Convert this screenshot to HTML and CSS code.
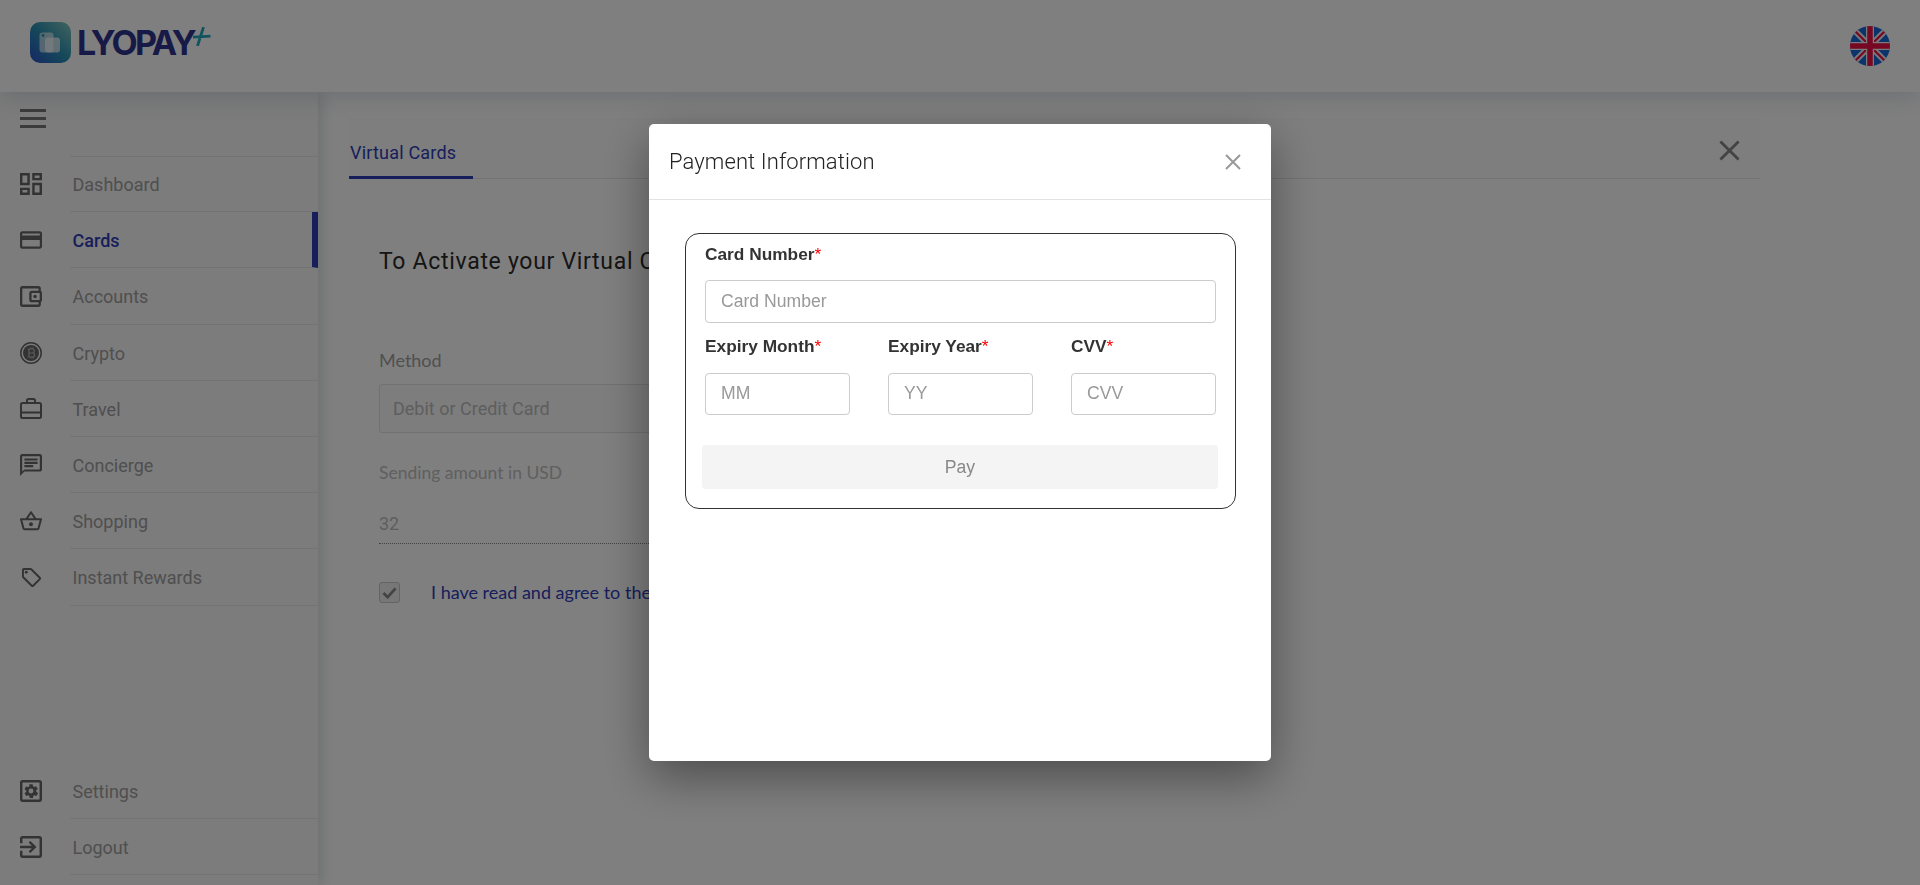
FILE: index.html
```html
<!DOCTYPE html>
<html lang="en">
<head>
<meta charset="utf-8">
<title>Lyopay</title>
<link rel="stylesheet" href="styles.css">
</head>
<body>
<div class="app">
  <header class="topbar">
    <div class="logo">
      <svg class="logo-mark" viewBox="0 0 41 41">
        <defs><linearGradient id="lg" x1="0" y1="1" x2="1" y2="0"><stop offset="0" stop-color="#2a50c8"/><stop offset=".5" stop-color="#2a92b4"/><stop offset="1" stop-color="#86c8c0"/></linearGradient></defs>
        <rect width="41" height="41" rx="10" fill="url(#lg)"/>
        <rect x="9.500" y="10.500" width="14" height="20" rx="3" fill="#fff" fill-opacity=".6"/>
        <rect x="15" y="15.500" width="15" height="15" rx="3" fill="#fff" fill-opacity=".7"/>
        <circle cx="13" cy="13.500" r="1.400" fill="#2a92b4"/>
      </svg>
      <span class="logo-text">LYOPAY</span>
      <svg class="logo-plus" viewBox="0 0 18 19"><path d="M0 10.200 L17.500 9.200 M10.500 0 L4.500 19" fill="none" stroke="#22a8c0" stroke-width="2.800"/></svg>
    </div>
    <svg class="flag" viewBox="0 0 40 40">
      <defs><clipPath id="fc"><circle cx="20" cy="20" r="20"/></clipPath></defs>
      <g clip-path="url(#fc)">
        <rect width="40" height="40" fill="#1668d8"/>
        <path d="M0 0 L40 40 M40 0 L0 40" stroke="#f2f2f2" stroke-width="6"/>
        <path d="M4 4 L17 17 M36 36 L23 23 M36 4 L24 16 M4 36 L16 24" stroke="#ee1048" stroke-width="2.200"/>
        <path d="M20 0 V40 M0 20 H40" stroke="#f2f2f2" stroke-width="8"/>
        <path d="M20 0 V40 M0 20 H40" stroke="#ee1048" stroke-width="5.500"/>
      </g>
    </svg>
  </header>

  <div class="layout">
    <aside class="sidebar">
      <button class="burger" type="button" aria-label="Menu"><span></span><span></span><span></span></button>
      <nav class="nav first-nav">
        <a class="row"><span class="ico"><svg width="22" height="22" viewBox="3 3 18 18"><path d="M19 5v2h-4V5h4M9 5v6H5V5h4m10 8v6h-4v-6h4M9 17v2H5v-2h4M21 3h-8v6h8V3zM11 3H3v10h8V3zm10 8h-8v10h8V11zm-10 4H3v6h8v-6z"/></svg></span><span class="lbl">Dashboard</span></a>
        <a class="row active"><span class="ico"><svg width="22" height="18" viewBox="2 4 20 16"><path d="M20 4H4c-1.110 0-1.990.890-1.990 2L2 18c0 1.110.890 2 2 2h16c1.110 0 2-.890 2-2V6c0-1.110-.890-2-2-2zm0 14H4v-6h16v6zm0-10H4V6h16v2z"/></svg></span><span class="lbl">Cards</span></a>
        <a class="row"><span class="ico"><svg width="22" height="21" viewBox="3 3 19 18"><path d="M21 7.280V5c0-1.100-.900-2-2-2H5c-1.110 0-2 .900-2 2v14c0 1.100.890 2 2 2h14c1.100 0 2-.900 2-2v-2.280c.590-.350 1-.980 1-1.720V9c0-.740-.410-1.370-1-1.720zM20 9v6h-7V9h7zM5 19V5h14v2h-6c-1.100 0-2 .900-2 2v6c0 1.100.900 2 2 2h6v2H5z"/><circle cx="16" cy="12" r="1.500"/></svg></span><span class="lbl">Accounts</span></a>
        <a class="row"><span class="ico"><svg width="22" height="22" viewBox="0 0 22 22"><circle cx="11" cy="11" r="10.200" fill="none" stroke="#666" stroke-width="1.500"/><circle cx="11" cy="11" r="8"/><path d="M9 6.500v9M11 5.500v1.500M13 5.500v1.500M11 15v1.500M13 15v1.500M7.800 7h4.400a2 2 0 0 1 0 4H9h3.600a2 2 0 0 1 0 4H7.800" fill="none" stroke="#b8b8b8" stroke-width="1.200"/></svg></span><span class="lbl">Crypto</span></a>
        <a class="row"><span class="ico"><svg width="22" height="21" viewBox="0 0 22 21"><path d="M7 5V2.500A1.500 1.500 0 0 1 8.500 1h5A1.500 1.500 0 0 1 15 2.500V5" fill="none" stroke="#666" stroke-width="2"/><rect x="1" y="5" width="20" height="15" rx="1.500" fill="none" stroke="#666" stroke-width="2"/><path d="M1 14.500h20" stroke="#666" stroke-width="2"/></svg></span><span class="lbl">Travel</span></a>
        <a class="row"><span class="ico"><svg width="22" height="22" viewBox="2 2 20 20"><path d="M20 2H4c-1.100 0-2 .900-2 2v18l4-4h14c1.100 0 2-.900 2-2V4c0-1.100-.900-2-2-2zm0 14H6l-2 2V4h16v12z"/><path d="M6 6h12v2H6zm0 3h12v2H6zm0 3h8v2H6z"/></svg></span><span class="lbl">Concierge</span></a>
        <a class="row"><span class="ico"><svg width="22" height="20" viewBox="1 2 22 19.500"><path d="M22 9h-4.790l-4.380-6.560c-.190-.280-.510-.420-.830-.420s-.640.140-.830.430L6.790 9H2c-.550 0-1 .450-1 1 0 .090.010.180.040.270l2.540 9.270c.230.840 1 1.460 1.920 1.460h13c.920 0 1.690-.620 1.930-1.460l2.540-9.270L23 10c0-.550-.450-1-1-1zM12 4.800L14.800 9H9.200L12 4.800zM18.500 19l-12.990.010L3.310 11H20.700l-2.200 8zM12 13c-1.100 0-2 .900-2 2s.900 2 2 2 2-.900 2-2-.900-2-2-2z"/></svg></span><span class="lbl">Shopping</span></a>
        <a class="row"><span class="ico"><svg class="tag" width="19" height="19" viewBox="2 2 20 20"><path d="M21.410 11.580l-9-9C12.050 2.220 11.550 2 11 2H4c-1.100 0-2 .900-2 2v7c0 .550.220 1.050.590 1.420l9 9c.360.360.860.580 1.410.580s1.050-.220 1.410-.590l7-7c.370-.360.590-.860.590-1.410s-.230-1.060-.590-1.420zM13 20.010L4 11V4h7v-.010l9 9-7 7.020z"/><circle cx="6.500" cy="6.500" r="1.500"/></svg></span><span class="lbl">Instant Rewards</span></a>
      </nav>
      <nav class="nav bottom-nav">
        <a class="row"><span class="ico"><svg width="22" height="22" viewBox="3 3 18 18"><path d="M19 3H5c-1.110 0-2 .900-2 2v14c0 1.100.890 2 2 2h14c1.110 0 2-.900 2-2V5c0-1.100-.890-2-2-2zm0 16H5V5h14v14z"/><path transform="translate(2.400 2.400) scale(.8)" d="M17.250 12c0-.230-.020-.460-.050-.680l1.480-1.160c.130-.110.170-.300.080-.450l-1.400-2.420c-.090-.150-.270-.210-.430-.150l-1.740.700c-.360-.280-.760-.510-1.180-.690l-.260-1.850c-.030-.170-.180-.300-.350-.300h-2.800c-.170 0-.320.130-.350.300L10.300 7.350c-.420.180-.820.410-1.180.690l-1.740-.700c-.160-.060-.340 0-.430.150l-1.400 2.420c-.090.150-.050.340.080.450l1.480 1.160c-.030.220-.050.450-.050.680 0 .230.020.460.050.680l-1.480 1.160c-.130.110-.170.300-.080.450l1.400 2.420c.090.150.270.210.430.150l1.740-.700c.360.280.760.510 1.180.69l.260 1.850c.030.170.180.300.350.300h2.800c.170 0 .320-.130.350-.300l.260-1.850c.420-.180.820-.410 1.180-.690l1.740.700c.160.060.340 0 .430-.150l1.400-2.420c.090-.150.050-.340-.080-.450l-1.480-1.160c.030-.220.050-.450.050-.680zm-5.250 2.500a2.500 2.500 0 1 1 0-5 2.500 2.500 0 0 1 0 5z"/></svg></span><span class="lbl">Settings</span></a>
        <a class="row"><span class="ico"><svg width="22" height="22" viewBox="3 3 18 18"><path d="M10.090 15.590L11.500 17l5-5-5-5-1.410 1.410L12.670 11H3v2h9.670l-2.580 2.590zM19 3H5c-1.110 0-2 .900-2 2v4h2V5h14v14H5v-4H3v4c0 1.100.890 2 2 2h14c1.100 0 2-.900 2-2V5c0-1.100-.900-2-2-2z"/></svg></span><span class="lbl">Logout</span></a>
      </nav>
    </aside>

    <main class="main">
      <div class="tabbar">
        <span class="tab">Virtual Cards</span>
        <svg class="tab-close" viewBox="0 0 22 22"><path d="M1.500 1.500 L20.500 20.500 M20.500 1.500 L1.500 20.500" stroke="#868686" stroke-width="3" fill="none"/></svg>
      </div>
      <section class="panel">
        <h2 class="headline">To Activate your Virtual Card</h2>
        <label class="f-label">Method</label>
        <div class="select">Debit or Credit Card</div>
        <label class="f-label amount-label">Sending amount in USD</label>
        <div class="amount">32</div>
        <div class="agree">
          <span class="check"><svg viewBox="0 0 16 14" width="15" height="13"><path d="M1.500 7.500 L6 12 L14.500 2.500" fill="none" stroke="#888" stroke-width="3"/></svg></span>
          <span class="agree-text">I have read and agree to the terms</span>
        </div>
      </section>
    </main>
  </div>
</div>

<div class="overlay">
  <div class="modal">
    <div class="modal-head">
      <h3 class="modal-title">Payment Information</h3>
      <svg class="modal-close" viewBox="0 0 16 16"><path d="M1 1 L15 15 M15 1 L1 15" stroke="#999" stroke-width="2" fill="none"/></svg>
    </div>
    <div class="modal-body">
      <form class="pay-box">
        <div class="lab card-lab">Card Number<i>*</i></div>
        <input class="inp" type="text" placeholder="Card Number">
        <div class="triple">
          <div class="col"><div class="lab">Expiry Month<i>*</i></div><input class="inp" type="text" placeholder="MM"></div>
          <div class="col"><div class="lab">Expiry Year<i>*</i></div><input class="inp" type="text" placeholder="YY"></div>
          <div class="col"><div class="lab">CVV<i>*</i></div><input class="inp" type="text" placeholder="CVV"></div>
        </div>
        <button class="pay" type="button">Pay</button>
      </form>
    </div>
  </div>
</div>
</body>
</html>
```
FILE: styles.css
```css
* { box-sizing: border-box; }
html, body { margin: 0; height: 100%; overflow: hidden; }
body { background: #fff; font-family: Roboto, "Liberation Sans", sans-serif; color: #333; }

.app { height: 885px; display: flex; flex-direction: column; }

.topbar {
  height: 92px; flex: none; background: #fff; position: relative; z-index: 2;
  display: flex; align-items: center; justify-content: space-between;
  padding: 0 30px; box-shadow: 0 4px 24px rgba(40, 60, 90, .18);
}
.logo { display: flex; align-items: center; margin-top: -8px; }
.logo-mark { width: 41px; height: 41px; display: block; }
.logo-text {
  font-family: Inter, "Liberation Sans", sans-serif; font-weight: 700; font-size: 34px;
  letter-spacing: -2.6px; color: #2f358e; margin-left: 6px; line-height: 41px;
}
.logo-plus { width: 18px; height: 19px; margin: -11px 0 0 -1px; }
.flag { width: 40px; height: 40px; display: block; }

.layout { flex: 1; display: flex; min-height: 0; }

.sidebar {
  width: 318px; flex: none; background: #f8f8f8; display: flex; flex-direction: column;
  padding-bottom: 10px; position: relative; z-index: 1;
  box-shadow: 4px 0 12px rgba(40, 60, 90, .16);
}
.burger {
  height: 64px; flex: none; border: 0; background: none; padding: 17px 0 0 20px;
  display: flex; flex-direction: column; gap: 5px; align-items: flex-start;
}
.burger span { display: block; width: 26px; height: 3px; background: #777; }
.nav { display: flex; flex-direction: column; }
.bottom-nav { margin-top: auto; }
.row { height: 56.2px; display: flex; align-items: stretch; }
.ico { width: 70px; flex: none; display: flex; align-items: center; padding-left: 20px; }
.ico svg { display: block; fill: #666; margin: 0 auto 0 0; }
.ico .tag { margin-left: 2px; }
.lbl {
  flex: 1; display: flex; align-items: center; padding: 2px 0 0 2.5px;
  font-size: 18px; color: #9e9e9e; border-bottom: 1px solid #e6e6e6;
}
.first-nav .row:first-child .lbl { border-top: 1px solid #e6e6e6; padding-top: 0; }
.row.active .lbl { color: #2f3cb8; font-weight: 500; border-right: 6px solid #2f3cb8; }

.main { flex: 1; min-width: 0; padding: 26px 160px 0 31px; }
.tabbar {
  height: 61px; display: flex; align-items: flex-end; justify-content: space-between;
  border-bottom: 1px solid #e6e6e6; background: #fcfcfc;
}
.tab {
  display: block; width: 124px; height: 38px; padding: 0 0 0 1px;
  font-size: 18px; line-height: 24px; color: #2f3cb8; letter-spacing: .2px;
  border-bottom: 3px solid #2f3cb8; margin-bottom: -1px;
}
.tab-close { width: 21px; height: 21px; margin: 0 20px 17px 0; }

.panel { padding: 67px 0 0 30px; width: 900px; }
.headline {
  margin: 0; font-size: 23px; font-weight: 400; line-height: 32px; color: #2a2a2a; letter-spacing: .7px;
}
.f-label {
  display: block; font-family: Lato, sans-serif; font-size: 18px; line-height: 24px; color: #a0a0a0;
  margin-top: 70px;
}
.select {
  margin-top: 12px; height: 49px; width: 820px; border: 1px solid #e2e2e2; background: #fafafa;
  border-radius: 3px; padding-left: 13px; display: flex; align-items: center;
  font-size: 18px; color: #bdbdbd;
}
.amount-label { margin-top: 28px; color: #c0c0c0; font-size: 17.5px; }
.amount {
  margin-top: 21px; height: 38px; width: 820px; font-size: 18px; line-height: 28px; color: #bdbdbd;
  border-bottom: 1px dotted #888; padding-top: 4px;
}
.agree { margin-top: 37px; display: flex; align-items: center; }
.check {
  width: 21px; height: 21px; border: 1px solid #c8c8c8; border-radius: 3px; background: #eee;
  display: flex; align-items: center; justify-content: center; flex: none;
}
.agree-text { margin-left: 31px; font-family: Lato, sans-serif; font-size: 18px; color: #2f3cb8; }

.overlay {
  position: fixed; inset: 0; background: rgba(0, 0, 0, .5); z-index: 10;
  display: flex; justify-content: center; padding-top: 124px;
}
.modal {
  width: 622px; height: 637px; background: #fff; border-radius: 5px;
  box-shadow: 0 16px 48px rgba(0, 0, 0, .4); display: flex; flex-direction: column;
}
.modal-head {
  height: 76px; flex: none; border-bottom: 1px solid #e2e2e2; padding: 0 30px 0 20px;
  display: flex; align-items: center; justify-content: space-between;
}
.modal-title { margin: 0; font-size: 22px; font-weight: 300; color: #222; letter-spacing: .1px; }
.modal-close { width: 16px; height: 16px; display: block; }
.modal-body { padding: 33px 35px 0 36px; }

.pay-box {
  height: 276px; border: 1px solid #333; border-radius: 14px; padding: 9px 19px 0 19px;
  font-family: "Liberation Sans", Arial, sans-serif;
}
.lab { font-size: 17.3px; font-weight: 700; line-height: 22px; color: #333; }
.lab i { font-style: normal; font-weight: 400; color: #f00; }
.inp {
  display: block; width: 100%; height: 43px; margin-top: 15px; padding: 0 15px 1px;
  border: 1px solid #ccc; border-radius: 4px; background: #fff;
  font: 17.6px "Liberation Sans", Arial, sans-serif; color: #333; outline: 0;
}
.inp::placeholder { color: #999; opacity: 1; }
.triple { display: flex; gap: 38px; margin-top: 12px; }
.col { flex: 1; min-width: 0; }
.col .inp { margin-top: 16px; height: 42px; }
.pay {
  display: block; width: 516px; height: 44px; margin: 30px 0 0 -3px; border: 0; border-radius: 4px;
  background: #f4f4f4; color: #888; font: 17.6px "Liberation Sans", Arial, sans-serif;
}
```
